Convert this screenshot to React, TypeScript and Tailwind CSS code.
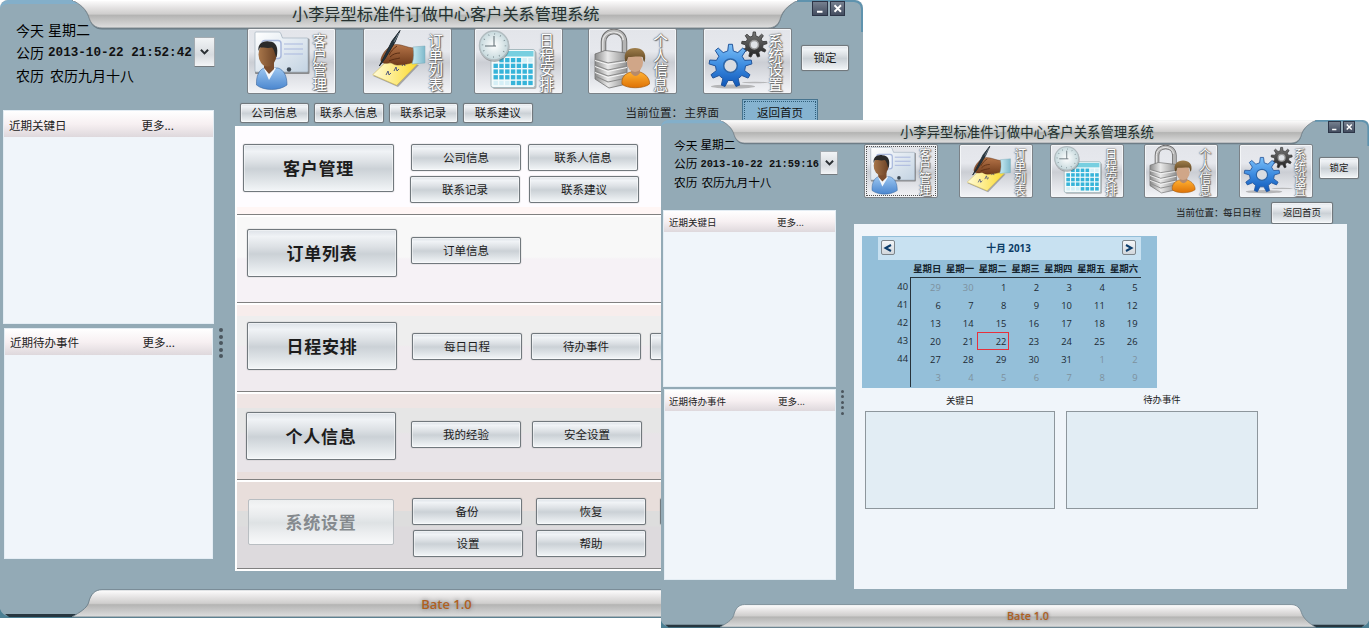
import type { ReactNode } from 'react';

const SILVER =
  'bg-[linear-gradient(180deg,#dde2e8_0%,#f0f3f6_14%,#dde1e5_36%,#cbd1d6_52%,#dbe0e4_72%,#f3f6f8_100%)]';

function gearPath(cx: number, cy: number, outer: number, inner: number, teeth: number) {
  const points: string[] = [];
  for (let i = 0; i < teeth; i++) {
    const step = (Math.PI * 2) / teeth;
    const a = i * step - Math.PI / 2;
    const corners: [number, number][] = [
      [-0.27, inner],
      [-0.13, outer],
      [0.13, outer],
      [0.27, inner],
    ];
    for (const [k, r] of corners) {
      points.push(`${(cx + r * Math.cos(a + k * step)).toFixed(2)},${(cy + r * Math.sin(a + k * step)).toFixed(2)}`);
    }
  }
  return `M${points.join('L')}Z`;
}

function Defs() {
  return (
    <svg className="absolute h-0 w-0" aria-hidden="true">
      <defs>
        <linearGradient id="metal" x1="0" y1="0" x2="0" y2="1">
          <stop offset="0" stopColor="#ffffff" />
          <stop offset=".3" stopColor="#e2e0e0" />
          <stop offset=".5" stopColor="#cfcecd" />
          <stop offset=".55" stopColor="#b4b4b3" />
          <stop offset="1" stopColor="#dedede" />
        </linearGradient>
        <linearGradient id="folder" x1="0" y1="0" x2="1" y2="1">
          <stop offset="0" stopColor="#ffffff" />
          <stop offset="1" stopColor="#c3d3e2" />
        </linearGradient>
        <linearGradient id="shirt" x1="0" y1="0" x2="0" y2="1">
          <stop offset="0" stopColor="#9cc6f0" />
          <stop offset="1" stopColor="#4a86cf" />
        </linearGradient>
        <linearGradient id="darkSkin" x1="0" y1="0" x2="1" y2="0">
          <stop offset="0" stopColor="#a8764a" />
          <stop offset="1" stopColor="#6b4226" />
        </linearGradient>
        <linearGradient id="paper" x1="0" y1="0" x2="1" y2="0">
          <stop offset="0" stopColor="#fffbd8" />
          <stop offset="1" stopColor="#fbd929" />
        </linearGradient>
        <linearGradient id="hand" x1="0" y1="0" x2="0" y2="1">
          <stop offset="0" stopColor="#b57448" />
          <stop offset="1" stopColor="#713c1c" />
        </linearGradient>
        <linearGradient id="cuff" x1="0" y1="0" x2="1" y2="0">
          <stop offset="0" stopColor="#c9ecf4" />
          <stop offset="1" stopColor="#7fb9cb" />
        </linearGradient>
        <radialGradient id="clock">
          <stop offset="0" stopColor="#ffffff" />
          <stop offset="1" stopColor="#c5d8dc" />
        </radialGradient>
        <linearGradient id="steel" x1="0" y1="0" x2="1" y2="0">
          <stop offset="0" stopColor="#8a8a8a" />
          <stop offset=".4" stopColor="#e9e9e9" />
          <stop offset="1" stopColor="#8f8f8f" />
        </linearGradient>
        <linearGradient id="orange" x1="0" y1="0" x2="0" y2="1">
          <stop offset="0" stopColor="#ffb133" />
          <stop offset="1" stopColor="#de7205" />
        </linearGradient>
        <linearGradient id="hair" x1="0" y1="0" x2="0" y2="1">
          <stop offset="0" stopColor="#a07f4c" />
          <stop offset="1" stopColor="#5d4320" />
        </linearGradient>
        <linearGradient id="blueGear" x1="0" y1="0" x2="0" y2="1">
          <stop offset="0" stopColor="#7cc0f8" />
          <stop offset=".5" stopColor="#3c8be0" />
          <stop offset="1" stopColor="#0f57b8" />
        </linearGradient>
        <linearGradient id="blackGear" x1="0" y1="0" x2="0" y2="1">
          <stop offset="0" stopColor="#777777" />
          <stop offset="1" stopColor="#222222" />
        </linearGradient>
      </defs>
    </svg>
  );
}

function CustomerIcon() {
  return (
    <>
      <path d="M9 5.500h24q1 0 1.500 2l1 3H61q1.500 0 1.500 1V45q0 1-1 1H9q-1 0-1-1V6.500q0-1 1-1z" fill="#555" opacity=".6" />
      <path d="M9 4h23q1.500 0 2 2l1.500 4H60q1 0 1 1v32q0 1-1 1H9q-1 0-1-1V5q0-1 1-1z" fill="url(#folder)" stroke="#a3b2bf" strokeWidth=".7" />
      <rect x="15" y="12.500" width="19" height="18" rx="3" fill="#eef4fb" stroke="#a9b8dc" strokeWidth="1.500" />
      <path d="M37 16h19M37 21h19M37 26h19" stroke="#a9b7dd" strokeWidth="1.200" />
      <circle cx="42" cy="41.500" r="2.200" fill="#3b4650" />
      <path d="M9.500 57C9 48 12 42 17 40h14c6 2 9 8 9 17-8 6-23 6-30.500 0z" fill="url(#shirt)" stroke="#3a679d" strokeWidth=".6" />
      <path d="M16.500 39.500L22 52l7-12z" fill="#f4f7fa" />
      <path d="M17 34h10v7l-5 5-5-6z" fill="#7c4e2e" />
      <ellipse cx="20.500" cy="26.500" rx="9" ry="12" fill="url(#darkSkin)" />
      <path d="M11.500 23c-1-7 4-10.500 10.500-9.500 7 0 10 6 7.500 16-1-1-2-8-4.500-10-3 1-10 0-12 0z" fill="#2b2b2b" />
    </>
  );
}

function OrderIcon() {
  return (
    <>
      <path d="M10 48l16-12 30 1-21 22z" fill="#666" opacity=".5" />
      <path d="M9.700 46.700L25 32l31 2.500-22.300 22.800z" fill="url(#paper)" stroke="#d1b53c" strokeWidth=".5" />
      <path d="M23 47l2-4 1 4 2-2M31 43l2-4 1 4 2-2M39 38l2-3 1 3" fill="none" stroke="#4d5680" strokeWidth="1" />
      <path d="M18 31c2-7 7-12 12-14 7-2 14 3 21 3v14c-5 2-12 3-17 3-4 0-5-3-8-2-4 1-9 0-8-4z" fill="url(#hand)" stroke="#5d3015" strokeWidth=".5" />
      <path d="M27 29c3-3 6-4 10-4M26 33c4-2 7-2 11-3M34 18c-4 3-6 5-8 9" stroke="#5b2e14" strokeWidth="1" fill="none" />
      <path d="M50 19l12-1v17l-13 1c2-6 2-11 1-17z" fill="url(#cuff)" stroke="#79a8b8" strokeWidth=".5" />
      <path d="M37 2.500L29 13l-9 18-3.700 7 5.200-6.500L32 14z" fill="#26343d" stroke="#1b262d" strokeWidth="1" />
      <path d="M36 5l-5 9" stroke="#93a6b2" strokeWidth=".7" />
    </>
  );
}

const calendarRows = ['..ooooxx', 'ooooooo', 'ooooooo', 'ooooooo', 'xxxoooo'].map((r) => r.slice(-7));

function ScheduleIcon() {
  return (
    <>
      <rect x="18.500" y="23" width="44" height="38" rx="2" fill="#777" opacity=".5" />
      <rect x="17" y="21.500" width="44" height="38" rx="2" fill="#f3fafb" stroke="#a6babf" strokeWidth="1" />
      <rect x="18.500" y="23" width="41" height="5.500" fill="#77cfe0" />
      {calendarRows.map((row, r) =>
        row.split('').map((c, i) =>
          c === '.' ? null : (
            <rect key={`${r}-${i}`} x={19.500 + i * 5.800} y={30 + r * 5.700} width="4.400" height="4.300" fill={c === 'o' ? '#36b4d9' : '#d5eff6'} />
          ),
        ),
      )}
      <circle cx="20.500" cy="19" r="15" fill="#666" opacity=".5" />
      <circle cx="20" cy="17.500" r="14.500" fill="url(#clock)" stroke="#b2bcc0" strokeWidth="1.500" />
      <circle cx="20" cy="17.500" r="11.500" fill="none" stroke="#7f9096" strokeWidth="1.600" strokeDasharray=".8 5.220" />
      <path d="M20 8v10M11 18h11" stroke="#5d6b71" strokeWidth="1" />
    </>
  );
}

function PersonalIcon() {
  return (
    <>
      <path d="M15.500 30V14c0-14 21-14 21 0v14" fill="none" stroke="#646464" strokeWidth="5.500" />
      <path d="M15.500 30V14c0-14 21-14 21 0v14" fill="none" stroke="#b5b5b5" strokeWidth="3.800" />
      <path d="M14.800 29V14c0-13 20-13 20.500-2" fill="none" stroke="#e9e9e9" strokeWidth="1.200" />
      <path d="M7 26l10-3.500L39 25v31l-18 4L7 51z" fill="url(#steel)" stroke="#707070" strokeWidth=".8" />
      <path d="M7 31l13 4 19-3M7 37l13 5 19-4M7 43l13 5 19-4M7 48l13 6 19-4" fill="none" stroke="#8a8a8a" strokeWidth="1.100" />
      <path d="M7 32.500l13 4 19-3M7 38.500l13 5 19-4M7 44.500l13 5 19-4" fill="none" stroke="#f5f5f5" strokeWidth="1" />
      <path d="M34 56c-1-7 4-11 9-12h9c6 2 10 7 9.500 12-6 5-23 5-27.500 0z" fill="url(#orange)" stroke="#a65a0b" strokeWidth=".7" />
      <path d="M43 40h9v5c-3 4-6 4-9 0z" fill="#b58a6c" />
      <ellipse cx="47" cy="34.500" rx="8" ry="9.500" fill="#d0a688" />
      <path d="M37.500 34c-3-10 3-14 9.500-14s12.500 4 9.500 14c-1.500-1-1-3-2-5-5-1-9 0-14 0-1 1-1 4-3 5z" fill="url(#hair)" />
    </>
  );
}

function SettingsIcon() {
  return (
    <>
      <ellipse cx="30" cy="58.500" rx="22" ry="2" fill="#888" opacity=".55" />
      <ellipse cx="52" cy="54.500" rx="13" ry=".8" fill="#888" opacity=".5" />
      <path d={gearPath(51.3, 16.7, 12.8, 8.8, 9)} fill="url(#blackGear)" stroke="#333" strokeWidth=".8" strokeLinejoin="round" />
      <circle cx="51.300" cy="16.700" r="4.200" fill="#dfe2e6" stroke="#999" strokeWidth="1.500" />
      <path d={gearPath(27.5, 37.7, 21.5, 15, 9)} fill="url(#blueGear)" stroke="#23559b" strokeWidth="1" strokeLinejoin="round" />
      <circle cx="27.500" cy="37.700" r="6.800" fill="#d9dce1" stroke="#2d66a8" strokeWidth="1.500" />
    </>
  );
}

type Size = 'lg' | 'sm';

function ToolButton({ label, icon, size, className = '', focused = false }: { label: string; icon: ReactNode; size: Size; className?: string; focused?: boolean }) {
  const lg = size === 'lg';
  return (
    <button
      className={`relative flex shrink-0 justify-end rounded-[2px] border border-[#7b8288] shadow-[inset_0_0_0_1px_#f4f6f8] bg-[linear-gradient(180deg,#e3e5ea_0%,#e6e8ed_35%,#cbced4_52%,#dfe1e6_75%,#f3f4f7_100%)] ${
        lg ? 'h-[66px] w-[89px] pr-[8px]' : 'h-[54px] w-[74px] pr-[6px]'
      } ${className}`}
    >
      <svg viewBox="1 1 87 64" className="absolute inset-0 h-full w-full" preserveAspectRatio="none">
        {icon}
      </svg>
      {focused && <span className="absolute inset-[1px] border border-dotted border-[#555]" />}
      <span
        className={`relative whitespace-nowrap text-white [text-orientation:upright] [text-shadow:0_0_1px_#666,0_0_1px_#777,1px_1px_1px_#666,0_0_2px_#777] [writing-mode:vertical-rl] ${
          lg ? 'mt-[3px] w-[15px] text-[14.700px] leading-[15px]' : 'mt-[2px] w-[13px] text-[12.200px] leading-[13px]'
        }`}
      >
        {label}
      </span>
    </button>
  );
}

function Btn({ children, className = '' }: { children?: ReactNode; className?: string }) {
  return (
    <button
      className={`flex shrink-0 items-center justify-center whitespace-nowrap rounded-[2px] border leading-none shadow-[inset_0_0_0_1px_rgba(255,255,255,.45),0_0_1px_#777] ${className}`}
    >
      {children}
    </button>
  );
}

const NORMAL = `border-[#71787d] text-[#1c1c1c] ${SILVER}`;
const DISABLED =
  'border-[#b9bec2] text-[#858a8e] bg-[linear-gradient(180deg,#eceeef_0%,#f3f4f5_14%,#e9ebed_36%,#dee2e4_52%,#eceef0_75%,#f8f9fa_100%)] shadow-none';

function WindowButtons({ className, box }: { className: string; box: string }) {
  const b = `flex items-center justify-center border border-[#2c3547] bg-[linear-gradient(180deg,#76808f,#434d60)] ${box}`;
  return (
    <div className={`flex ${className}`}>
      <button className={b}>
        <svg viewBox="0 0 14 14" className="h-full w-full">
          <path d="M4 10.500h6" stroke="#fff" strokeWidth="2" />
        </svg>
      </button>
      <button className={b}>
        <svg viewBox="0 0 14 14" className="h-full w-full">
          <path d="M3.500 3.500l7 7M10.500 3.500l-7 7" stroke="#fff" strokeWidth="2" />
        </svg>
      </button>
    </div>
  );
}

function TopBanner() {
  return (
    <svg viewBox="0 0 863 32" preserveAspectRatio="none" className="absolute inset-x-0 top-0 h-[114%] w-full">
      <path d="M0 8Q1 1 8 0H72L80 4H8Q2 4 0 9z" fill="#7fb0d0" opacity=".8" />
      <path d="M798 0h57q8 1 8 9v23h-2V9q0-6-7-7h-58z" fill="#5f93ae" />
      <path d="M72 0C80 4 86 10 88.500 17C90.500 25 95 29.500 102 29.500H768C775 29.500 779 25 780.500 20C783 10 791 4 798 0z" fill="#4d5c66" opacity=".6" />
      <path d="M72 0C80 4 86 9 88.500 16C90.500 24 95 28 102 28H768C775 28 779 24 780.500 18C783 9 791 4 798 0z" fill="url(#metal)" stroke="#7b868d" strokeWidth=".8" />
      <path d="M73 0H797" stroke="#fff" strokeWidth="2" />
    </svg>
  );
}

function BottomBanner() {
  return (
    <svg viewBox="0 0 863 29" preserveAspectRatio="none" className="absolute inset-0 h-full w-full">
      <path d="M0 20Q2 26 9 27.500H854Q861 26 863 20V29H0z" fill="#4c8094" />
      <path d="M5 25H858L854 28H9z" fill="#27363f" />
      <path d="M72 28C80 23 86 20 88.500 14C90.500 5 95 .7 102 .7H768C775 .7 779 5 780.500 10C783 18 791 24 798 28z" fill="url(#metal)" stroke="#6f828d" strokeWidth="1" />
    </svg>
  );
}

function Panel({ title, className, head }: { title: string; className: string; head: string }) {
  return (
    <section className={`flex shrink-0 flex-col border border-[#e4edf4] bg-[#f0f5fa] ${className}`}>
      <div className={`flex items-center bg-[linear-gradient(180deg,#ffffff,#f7f0f2_50%,#ded8dc)] leading-none text-[#222] ${head}`}>
        <span className="flex-1">{title}</span>
        <span>更多...</span>
      </div>
    </section>
  );
}

function Dots({ className, dot }: { className: string; dot: string }) {
  return (
    <div className={`flex flex-col ${className}`}>
      {[0, 1, 2, 3, 4].map((i) => (
        <span key={i} className={`rounded-full bg-[#4b565e] ${dot}`} />
      ))}
    </div>
  );
}

function Chevron({ className }: { className: string }) {
  return (
    <button className={`flex shrink-0 items-center justify-center rounded-[1px] border border-[#a3abb1] border-b-[#747b80] bg-[linear-gradient(180deg,#f2f4f6,#d7dbdf_60%,#f3f5f7)] ${className}`}>
      <svg viewBox="0 0 10 8" className="w-[9px]">
        <path d="M1 2l4 4 4-4" fill="none" stroke="#2b3034" strokeWidth="2.200" />
      </svg>
    </button>
  );
}

const TITLE = '小李异型标准件订做中心客户关系管理系统';
const SUB = `h-[27px] w-[110px] text-[11.500px] ${NORMAL}`;

type Group = {
  name: string;
  row: string;
  big: string;
  subs: string;
  disabled?: boolean;
  lines: { cls: string; items: string[] }[];
};

const groups: Group[] = [
  {
    name: '客户管理',
    row: 'h-[87px] bg-[linear-gradient(180deg,#fefcff_0_80px,#fff6f5_80px)]',
    big: 'ml-[6px] mt-[17px] h-[48px] w-[151px]',
    subs: 'ml-[16px] mt-[17px] gap-[5px]',
    lines: [
      { cls: 'ml-[1px] gap-[7px]', items: ['公司信息', '联系人信息'] },
      { cls: 'gap-[9px]', items: ['联系记录', '联系建议'] },
    ],
  },
  {
    name: '订单列表',
    row: 'h-[85px] bg-[linear-gradient(180deg,#f8f8f8_0_40px,#f6f2f6_42px)]',
    big: 'ml-[10px] mt-[12px] h-[48px] w-[150px]',
    subs: 'ml-[14px] mt-[20px]',
    lines: [{ cls: '', items: ['订单信息'] }],
  },
  {
    name: '日程安排',
    row: 'h-[86px] bg-[linear-gradient(180deg,#f7edec_0_11px,#eeeeee_11px_40px,#f0ebef_42px)]',
    big: 'ml-[10px] mt-[17px] h-[48px] w-[150px]',
    subs: 'ml-[15px] mt-[28px]',
    lines: [{ cls: 'gap-[9px]', items: ['每日日程', '待办事件', ''] }],
  },
  {
    name: '个人信息',
    row: 'h-[85px] bg-[linear-gradient(180deg,#efe5e4_0_14px,#e6e6e6_14px_38px,#e8e4e8_40px_78px,#e8dedc_78px)]',
    big: 'ml-[9px] mt-[18px] h-[48px] w-[150px]',
    subs: 'ml-[15px] mt-[27px]',
    lines: [{ cls: 'gap-[11px]', items: ['我的经验', '安全设置'] }],
  },
  {
    name: '系统设置',
    row: 'h-[86px] bg-[linear-gradient(180deg,#e8dedb_0_29px,#dddddd_29px_44px,#dddadd_45px)]',
    big: 'ml-[11px] mt-[17px] h-[46px] w-[146px]',
    subs: 'ml-[18px] mt-[16px] gap-[5px]',
    disabled: true,
    lines: [
      { cls: 'gap-[14px]', items: ['备份', '恢复', ''] },
      { cls: 'ml-[1px] gap-[13px]', items: ['设置', '帮助'] },
    ],
  },
];

function MainWindow() {
  return (
    <section className="absolute left-0 top-0 flex h-[618px] w-[863px] flex-col overflow-hidden rounded-tl-[8px] rounded-tr-[8px] bg-[#93aab6]">
      <header className="relative flex h-[28px] shrink-0">
        <TopBanner />
        <h1 className="relative flex w-[812px] items-center pb-[2px] pl-[292px] text-[16.200px] leading-none text-[#26302f] [text-shadow:0_0_2px_#9db8b4]">{TITLE}</h1>
        <WindowButtons className="relative mt-[1px] gap-[2px]" box="h-[15px] w-[15.500px]" />
      </header>
      <div className="flex h-[561px] shrink-0">
        <aside className="flex w-[216px] shrink-0 flex-col">
          <div className="-mt-[10px] flex h-[92px] shrink-0 flex-col pl-[16px] text-[14px] leading-none text-black">
            <div className="flex h-[22px] items-center gap-[4px]">
              <span className="pt-[2px]">今天</span>
              <span>星期二</span>
            </div>
            <div className="flex h-[23px] items-center gap-[4px]">
              <span>公历</span>
              <span className="w-[144px] whitespace-pre pt-[4px] font-['Liberation_Mono',monospace] text-[12.620px] font-bold text-[#111]">2013-10-22 21:52:42</span>
              <Chevron className="-ml-[2px] h-[30px] w-[21px]" />
            </div>
            <div className="flex h-[24px] items-center gap-[6px]">
              <span>农历</span>
              <span>农历九月十八</span>
            </div>
          </div>
          <Panel title="近期关键日" className="ml-[3px] h-[214px] w-[211px] text-[11.500px]" head="h-[26px] pl-[5px] pr-[39px] pt-[3px]" />
          <Panel title="近期待办事件" className="ml-[4px] mt-[4px] h-[231px] w-[209px] text-[11.500px]" head="h-[26px] pl-[5px] pr-[37px] pt-[2px]" />
        </aside>
        <Dots className="mr-[12px] mt-[300px] w-[7px] items-center gap-[2.600px] pl-[2px]" dot="h-[4px] w-[4px]" />
        <main className="flex w-[628px] shrink-0 flex-col">
          <div className="flex h-[71px] pl-[12px]">
            <ToolButton size="lg" label="客户管理" icon={<CustomerIcon />} />
            <ToolButton size="lg" label="订单列表" icon={<OrderIcon />} className="ml-[27px]" />
            <ToolButton size="lg" label="日程安排" icon={<ScheduleIcon />} className="ml-[22px]" />
            <ToolButton size="lg" label="个人信息" icon={<PersonalIcon />} className="ml-[25px]" />
            <ToolButton size="lg" label="系统设置" icon={<SettingsIcon />} className="ml-[26px]" />
            <Btn className={`ml-[9px] mt-[17px] h-[26px] w-[48px] text-[11.500px] ${NORMAL}`}>锁定</Btn>
          </div>
          <nav className="flex h-[27px] items-start pl-[4.500px] text-[11.500px]">
            {['公司信息', '联系人信息', '联系记录', '联系建议'].map((t) => (
              <Btn key={t} className={`mr-[5px] mt-[4px] h-[20px] w-[69.500px] ${NORMAL}`}>
                {t}
              </Btn>
            ))}
            <span className="ml-[88px] mt-[8px] w-[59px] shrink-0 whitespace-nowrap leading-none text-[#1c1c1c]">当前位置：</span>
            <span className="mt-[8px] w-[57.500px] shrink-0 leading-none text-[#1c1c1c]">主界面</span>
            <button className="flex h-[26px] w-[76px] shrink-0 items-center justify-center border border-[#47748f] bg-[#86b3d0] p-[1px] leading-none text-[#111]">
              <span className="flex h-full w-full items-center justify-center border border-dotted border-[#2f5d78] pt-[2px]">返回首页</span>
            </button>
          </nav>
          <div className="flex h-[445px] w-[616px] flex-col border-b-2 border-l-2 border-t border-white bg-white">
            {groups.map((g) => (
              <div key={g.name} className="shrink-0 [&:not(:last-child)]:pb-[2px]">
                <div className={`flex items-start overflow-hidden ${g.row}`}>
                  <Btn className={`pb-[2px] text-[17px] font-bold tracking-[.8px] ${g.big} ${g.disabled ? DISABLED : NORMAL}`}>{g.name}</Btn>
                  <div className={`flex flex-col ${g.subs}`}>
                    {g.lines.map((l) => (
                      <div key={l.items[0]} className={`flex ${l.cls}`}>
                        {l.items.map((t) => (
                          <Btn key={t} className={SUB}>
                            {t}
                          </Btn>
                        ))}
                      </div>
                    ))}
                  </div>
                </div>
                <hr className="h-[1px] border-0 bg-[#808080]" />
              </div>
            ))}
          </div>
        </main>
      </div>
      <footer className="relative flex h-[29px] shrink-0 items-center justify-center pl-[30px]">
        <BottomBanner />
        <span className="relative pt-[2px] font-['Open_Sans','Noto_Sans',sans-serif] text-[13px] font-semibold leading-none text-[#b0601f] [text-shadow:0_0_4px_#777]">Bate 1.0</span>
      </footer>
    </section>
  );
}

const days = ['日', '一', '二', '三', '四', '五', '六'];
const weeks: { no: string; cells: number[]; muted: (i: number) => boolean }[] = [
  { no: '40', cells: [29, 30, 1, 2, 3, 4, 5], muted: (i) => i < 2 },
  { no: '41', cells: [6, 7, 8, 9, 10, 11, 12], muted: () => false },
  { no: '42', cells: [13, 14, 15, 16, 17, 18, 19], muted: () => false },
  { no: '43', cells: [20, 21, 22, 23, 24, 25, 26], muted: () => false },
  { no: '44', cells: [27, 28, 29, 30, 31, 1, 2], muted: (i) => i > 4 },
  { no: '', cells: [3, 4, 5, 6, 7, 8, 9], muted: () => true },
];

function ArrowButton({ d }: { d: string }) {
  return (
    <button className="flex h-[15px] w-[14px] items-center justify-center rounded-[2px] border border-[#7d858b] bg-[linear-gradient(180deg,#f4f6f8,#d2d7dc)]">
      <svg viewBox="0 0 10 10" className="h-[10px] w-[10px]">
        <path d={d} fill="none" stroke="#0d3d6b" strokeWidth="2" />
      </svg>
    </button>
  );
}

function Calendar() {
  return (
    <div className="flex h-[152px] w-[295px] flex-col bg-[#94bfd9] pl-[16px] pt-[1px] font-['Open_Sans','Noto_Sans','Noto_Sans_CJK_SC',sans-serif] leading-none">
      <div className="flex h-[23px] w-[263px] shrink-0 items-start justify-between bg-[#c8e1f1] pl-[3px] pr-[5px] pt-[3px]">
        <ArrowButton d="M8 2L2.500 5l5.500 3" />
        <span className="mt-[4px] text-[9.800px] font-bold text-[#0b3c66]">十月 2013</span>
        <ArrowButton d="M2 2l5.500 3L2 8" />
      </div>
      <div className="flex h-[17px] w-[263px] shrink-0 pl-[33px] pt-[1px] text-[9.400px] font-bold text-[#16242e]">
        {days.map((d) => (
          <span key={d} className="flex w-[32.800px] items-center justify-end pr-[2.500px]">
            星期{d}
          </span>
        ))}
      </div>
      <div className="flex text-[9.400px] text-[#1c2932]">
        <div className="flex w-[32px] flex-col">
          {weeks.map((w) => (
            <span key={w.no} className="flex h-[18px] items-center justify-end pr-[2px] pt-[2px]">
              {w.no}
            </span>
          ))}
        </div>
        <div className="flex h-[110px] w-[231px] flex-col border-l border-t border-[#26323a]">
          {weeks.map((w) => (
            <div key={w.no} className="flex h-[18px] shrink-0">
              {w.cells.map((c, i) => (
                <span
                  key={i}
                  className={`flex w-[32.800px] items-center justify-end border pr-[2px] pt-[1px] ${w.muted(i) ? 'text-[#7d919e]' : ''} ${
                    w.no === '43' && c === 22 ? 'border-[#e8303c]' : 'border-transparent'
                  }`}
                >
                  {c}
                </span>
              ))}
            </div>
          ))}
        </div>
      </div>
    </div>
  );
}

function ScheduleWindow() {
  return (
    <section className="absolute left-[661px] top-[120px] flex h-[508px] w-[708px] flex-col overflow-hidden rounded-t-[6px] bg-[#93aab6]">
      <header className="relative flex h-[23px] shrink-0">
        <TopBanner />
        <h1 className="relative flex w-[667px] items-center pl-[239px] text-[13.370px] leading-none text-[#26302f] [text-shadow:0_0_2px_#9db8b4]">{TITLE}</h1>
        <WindowButtons className="relative mt-[1px] gap-[2px]" box="h-[12px] w-[12.500px]" />
      </header>
      <div className="flex h-[461px] shrink-0">
        <aside className="flex w-[178px] shrink-0 flex-col">
          <div className="-mt-[8px] flex h-[75px] shrink-0 flex-col pl-[13px] text-[11.700px] leading-none text-black">
            <div className="flex h-[18px] items-center gap-[3px]">
              <span className="pt-[2px]">今天</span>
              <span>星期二</span>
            </div>
            <div className="flex h-[19px] items-center gap-[3px]">
              <span>公历</span>
              <span className="w-[119px] whitespace-pre pt-[3px] font-['Liberation_Mono',monospace] text-[10.400px] font-bold text-[#111]">2013-10-22 21:59:16</span>
              <Chevron className="-ml-[2px] h-[24px] w-[18px]" />
            </div>
            <div className="flex h-[19px] items-center gap-[4px]">
              <span>农历</span>
              <span>农历九月十八</span>
            </div>
          </div>
          <Panel title="近期关键日" className="ml-[2px] h-[177px] w-[173px] text-[9.500px]" head="h-[21px] pl-[5px] pr-[31px] pt-[3px]" />
          <Panel title="近期待办事件" className="ml-[3px] mt-[2px] h-[191px] w-[172px] text-[9.500px]" head="h-[21px] pl-[4px] pr-[30px] pt-[3px]" />
        </aside>
        <Dots className="mr-[10px] mt-[247px] w-[5px] items-center gap-[2.400px] pl-[2px]" dot="h-[3px] w-[3px]" />
        <main className="flex w-[515px] shrink-0 flex-col">
          <div className="flex h-[58px] pl-[10px] pt-[1px]">
            <ToolButton size="sm" label="客户管理" icon={<CustomerIcon />} focused />
            <ToolButton size="sm" label="订单列表" icon={<OrderIcon />} className="ml-[21px]" />
            <ToolButton size="sm" label="日程安排" icon={<ScheduleIcon />} className="ml-[17px]" />
            <ToolButton size="sm" label="个人信息" icon={<PersonalIcon />} className="ml-[20px]" />
            <ToolButton size="sm" label="系统设置" icon={<SettingsIcon />} className="ml-[21px]" />
            <Btn className={`ml-[6px] mt-[13px] h-[22px] w-[40px] text-[9.500px] ${NORMAL}`}>锁定</Btn>
          </div>
          <nav className="flex h-[23px] items-center whitespace-nowrap pl-[322px] text-[9.500px] leading-none text-[#1c1c1c]">
            <span className="w-[47px] shrink-0">当前位置：</span>
            <span className="w-[48px] shrink-0">每日日程</span>
            <Btn className={`h-[22px] w-[62px] ${NORMAL}`}>返回首页</Btn>
          </nav>
          <div className="flex h-[365px] w-[493px] flex-col bg-[#f0f5fa] pl-[8px] pt-[12px]">
            <Calendar />
            <div className="flex gap-[11px] pl-[3px] text-[9.400px] leading-none text-[#222]">
              <div className="w-[190px]">
                <p className="flex h-[23px] items-center justify-center pt-[2px]">关键日</p>
                <div className="h-[98px] border border-[#8d969c] bg-[#e2edf4]" />
              </div>
              <div className="w-[192px]">
                <p className="flex h-[23px] items-center justify-center">待办事件</p>
                <div className="h-[98px] border border-[#8d969c] bg-[#e2edf4]" />
              </div>
            </div>
          </div>
        </main>
      </div>
      <footer className="relative flex h-[24px] shrink-0 items-center justify-center pl-[26px]">
        <BottomBanner />
        <span className="relative pt-[1px] font-['Open_Sans','Noto_Sans',sans-serif] text-[10.800px] font-semibold leading-none text-[#b0601f] [text-shadow:0_0_3px_#777]">Bate 1.0</span>
      </footer>
    </section>
  );
}

export default function App() {
  return (
    <div className="relative h-[628px] w-[1370px] overflow-hidden bg-white font-['Noto_Sans_CJK_SC',sans-serif]">
      <Defs />
      <MainWindow />
      <ScheduleWindow />
    </div>
  );
}
